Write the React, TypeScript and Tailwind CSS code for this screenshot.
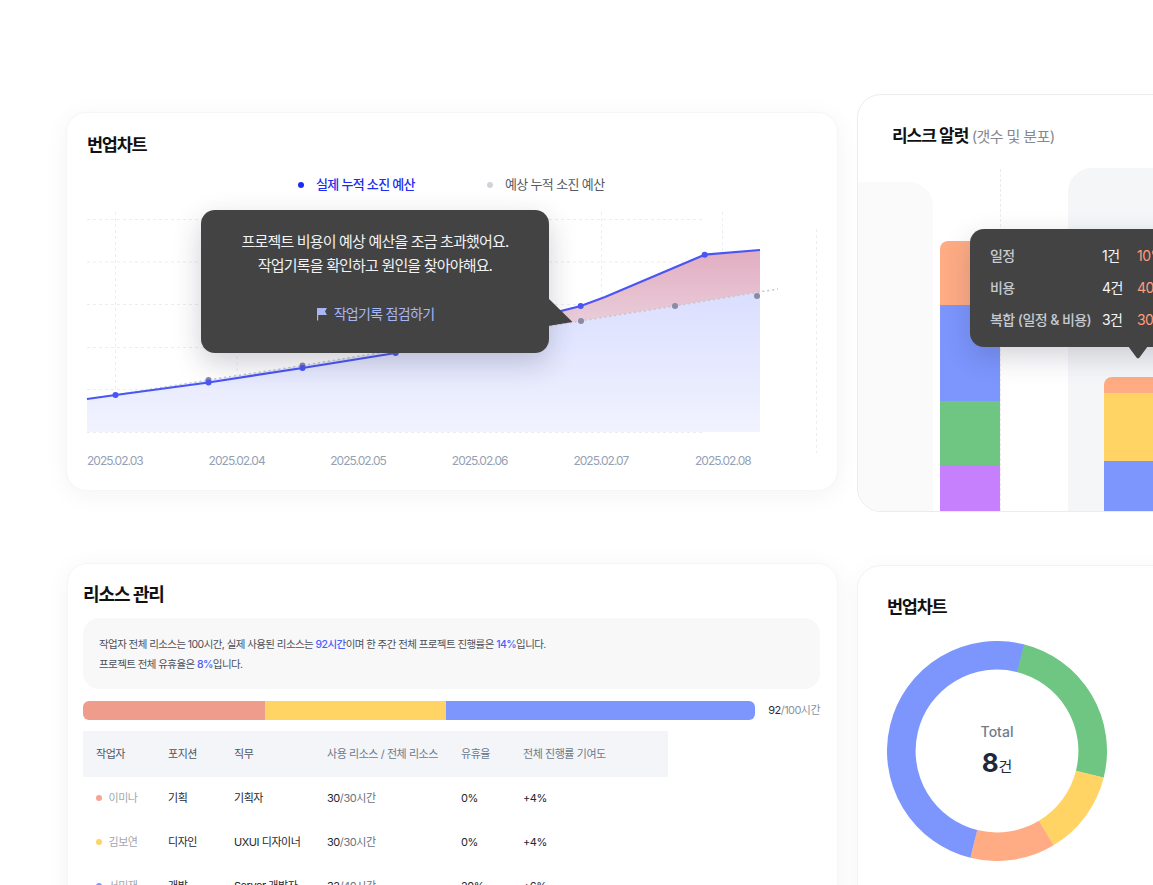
const blueLine = '87,399 115.5,395 208.5,382.5 302.5,368 395.6,353 490,329 580.7,306 605,297 704.7,254.7 760,250';
const greyLine = '115.5,395 208.5,380 302.5,365.5 395.6,350 490,335 580.7,321 675,306 760,292';

const dates = ['2025.02.03', '2025.02.04', '2025.02.05', '2025.02.06', '2025.02.07', '2025.02.08'];

const workers = [
  { name: '이미나', dot: 'bg-[#f9a392]', pos: '기획', job: '기획자', used: '30', total: '/30시간', idle: '0%', add: '+4%' },
  { name: '김보연', dot: 'bg-[#ffd465]', pos: '디자인', job: 'UXUI 디자이너', used: '30', total: '/30시간', idle: '0%', add: '+4%' },
  { name: '서민재', dot: 'bg-[#7c96fe]', pos: '개발', job: 'Server 개발자', used: '32', total: '/40시간', idle: '20%', add: '+6%' },
];

const alerts = [
  { label: '일정', count: '1건', pct: '10%' },
  { label: '비용', count: '4건', pct: '40%' },
  { label: '복합 (일정 & 비용)', count: '3건', pct: '30%' },
];

function BurnupChart() {
  const hLines = [219.5, 262, 304.5, 347.5, 389.5, 432.5];
  const vLines = [115.5, 237, 358.5, 480.5, 601.5, 722.5];
  return (
    <svg viewBox="67 205 770 248" className="block w-[770px] h-[248px]">
      <defs>
        <linearGradient id="under" x1="0" y1="290" x2="0" y2="432" gradientUnits="userSpaceOnUse">
          <stop offset="0" stopColor="#dadeff" />
          <stop offset="1" stopColor="#f1f3fe" />
        </linearGradient>
        <linearGradient id="over" x1="0" y1="250" x2="0" y2="330" gradientUnits="userSpaceOnUse">
          <stop offset="0" stopColor="#e2adc1" />
          <stop offset="1" stopColor="#ead0dc" />
        </linearGradient>
      </defs>
      {hLines.map((y) => (
        <line key={y} x1="87" x2="704" y1={y} y2={y} stroke="#ecedf0" strokeDasharray="3 3" />
      ))}
      {vLines.map((x) => (
        <line key={x} x1={x} x2={x} y1="212" y2="432" stroke="#ecedf0" strokeDasharray="3 3" />
      ))}
      <line x1="816.5" x2="816.5" y1="229" y2="453" stroke="#ecedf0" strokeDasharray="3 3" />
      <polygon points={`87,399 ${greyLine} 760,432 87,432`} fill="url(#under)" />
      <polygon points={`395.6,350 395.6,353 490,329 580.7,306 605,297 704.7,254.7 760,250 760,292 675,306 580.7,321 490,335`} fill="url(#over)" />
      <polyline points="115.5,395 208.5,380 302.5,365.5 395.6,350 490,335 580.7,321 675,306 778,289" fill="none" stroke="#c3c5d0" strokeWidth="1.5" strokeDasharray="2 3" />
      <polyline points={blueLine} fill="none" stroke="#4a55f5" strokeWidth="2.2" />
      {[[208.5, 380], [302.5, 365.5], [581, 321], [675, 306], [757, 296]].map(([x, y]) => (
        <circle key={x} cx={x} cy={y} r="3" fill="#8a8aa6" />
      ))}
      {[[115.5, 395], [208.5, 382.5], [302.5, 368], [395.6, 353], [580.7, 306], [704.7, 254.7]].map(([x, y]) => (
        <circle key={x} cx={x} cy={y} r="3" fill="#4a55f5" />
      ))}
    </svg>
  );
}

function Donut() {
  const r = 95.7;
  const c = 2 * Math.PI * r;
  const parts = [
    { color: '#6ec682', from: 14, deg: 90 },
    { color: '#ffd465', from: 104, deg: 45 },
    { color: '#ffac84', from: 149, deg: 45 },
    { color: '#7c96fe', from: 194, deg: 180 },
  ];
  return (
    <svg viewBox="0 0 220 220" className="absolute inset-0 w-[220px] h-[220px]">
      {parts.map((p) => (
        <circle
          key={p.color}
          cx="110"
          cy="110"
          r={r}
          fill="none"
          stroke={p.color}
          strokeWidth="28.6"
          strokeDasharray={`${(p.deg / 360) * c} ${c}`}
          transform={`rotate(${p.from - 90} 110 110)`}
        />
      ))}
    </svg>
  );
}

export default function App() {
  return (
    <div className="w-[1153px] h-[885px] overflow-hidden bg-white flex gap-[19px] pl-[67px] font-['Inter','Noto_Sans_CJK_KR',sans-serif]">
      <div className="w-[771px] shrink-0 pt-[113px]">
        {/* burnup */}
        <section className="relative w-[770px] h-[377px] rounded-[20px] bg-white border border-[#f6f6f7] shadow-[0_4px_24px_rgba(30,40,80,0.05)] -mt-px -ml-px box-content">
          <h2 className="pt-5 pl-5 text-[17.5px] leading-[24px] font-semibold tracking-[-0.07em] text-[#111]">번업차트</h2>
          <div className="flex mt-[18px] h-[20px] items-center text-[13px] tracking-[-0.05em]">
            <div className="flex items-center gap-3 ml-[231px] text-[#1d2df0] font-medium">
              <span className="w-[6px] h-[6px] rounded-full bg-[#1d2df0]" />
              실제 누적 소진 예산
            </div>
            <div className="flex items-center gap-3 ml-[72px] text-[#555a60]">
              <span className="w-[6px] h-[6px] rounded-full bg-[#d1d3db]" />
              예상 누적 소진 예산
            </div>
          </div>
          <div className="mt-[10px]">
            <BurnupChart />
          </div>
          <div className="flex pl-5 text-[12px] leading-4 tracking-[-0.08em] text-[#94a1b5]">
            {dates.map((d) => (
              <span key={d} className="w-[121.6px] shrink-0">{d}</span>
            ))}
          </div>
          <div className="absolute left-[134px] top-[97px] w-[348px] h-[143px] rounded-[14px] bg-[#434344] shadow-[0_10px_28px_rgba(40,40,70,0.22)] flex flex-col items-center pt-[20px]">
            <p className="text-[15px] leading-[24px] tracking-[-0.055em] text-[#f2f2f3] text-center">
              프로젝트 비용이 예상 예산을 조금 초과했어요.
              <br />
              작업기록을 확인하고 원인을 찾아야해요.
            </p>
            <div className="flex items-center gap-[6px] mt-[24px] text-[14px] leading-[24px] tracking-[-0.05em] text-[#aab6f3]">
              <svg viewBox="0 0 12 14" className="w-3 h-[14px]" fill="#aab6f3">
                <path d="M1 1h10L9 4.5 11 8H2.2v5.5H1z" />
              </svg>
              작업기록 점검하기
            </div>
            <svg viewBox="0 0 26 30" className="absolute left-[347px] top-[88px] w-[26px] h-[30px]" fill="#434344">
              <path d="M0 0 24.5 24 0 28z" />
            </svg>
          </div>
        </section>

        {/* resources */}
        <section className="w-[771px] h-[400px] mt-[72px] rounded-[20px] bg-white border border-[#f6f6f7] shadow-[0_4px_24px_rgba(30,40,80,0.05)] px-[15px] pt-[19px]">
          <h2 className="text-[18px] leading-[24px] font-semibold tracking-[-0.06em] text-[#111]">리소스 관리</h2>
          <div className="mt-[11px] h-[71px] w-[737px] rounded-2xl bg-[#f8f8f9] px-4 pt-[17px] text-[10.5px] leading-5 tracking-[-0.055em] text-[#4b5058]">
            <p>작업자 전체 리소스는 100시간, 실제 사용된 리소스는 <b className="font-medium text-[#4a5cff]">92시간</b>이며 한 주간 전체 프로젝트 진행률은 <b className="font-medium text-[#4a5cff]">14%</b>입니다.</p>
            <p>프로젝트 전체 유휴율은 <b className="font-medium text-[#4a5cff]">8%</b>입니다.</p>
          </div>
          <div className="mt-3 flex items-center w-[737px]">
            <div className="w-[672px] h-[19px] rounded-md overflow-hidden flex">
              <div className="w-[181.5px] bg-[#ef9c8c]" />
              <div className="w-[181.5px] bg-[#ffd465]" />
              <div className="flex-1 bg-[#7c96fe]" />
            </div>
            <div className="ml-auto text-[11px] tracking-[-0.05em] text-[#8b93a1]"><span className="text-[#2b2f36]">92</span>/100시간</div>
          </div>
          <table className="mt-[11px] w-[585px] table-fixed border-collapse text-[11px] tracking-[-0.04em]">
            <thead>
              <tr className="h-[46px] bg-[#f4f5f8] text-left">
                <th className="w-[85px] pl-[13px] font-normal text-[#4b5563]">작업자</th>
                <th className="w-[66px] font-normal text-[#4b5563]">포지션</th>
                <th className="w-[93px] font-normal text-[#4b5563]">직무</th>
                <th className="w-[134px] font-normal text-[#6b7a8c]">사용 리소스 / 전체 리소스</th>
                <th className="w-[62px] font-normal text-[#6b7a8c]">유휴율</th>
                <th className="font-normal text-[#6b7a8c]">전체 진행률 기여도</th>
              </tr>
            </thead>
            <tbody className="text-[#24272c] [&_td]:pb-[2px]">
              {workers.map((w) => (
                <tr key={w.name} className="h-[44px]">
                  <td className="pl-[13px]">
                    <span className="flex items-center gap-[6.5px] text-[#a3a7ae]">
                      <span className={`w-[6px] h-[6px] rounded-full ${w.dot}`} />
                      {w.name}
                    </span>
                  </td>
                  <td>{w.pos}</td>
                  <td>{w.job}</td>
                  <td>{w.used}<span className="text-[#6b7280]">{w.total}</span></td>
                  <td>{w.idle}</td>
                  <td>{w.add}</td>
                </tr>
              ))}
            </tbody>
          </table>
        </section>
      </div>

      <div className="w-[400px] shrink-0 pt-[94px]">
        {/* risk */}
        <section className="relative w-[400px] h-[418px] rounded-[24px] bg-white border border-[#ececee] overflow-hidden flex flex-col">
          <h2 className="pl-[34px] pt-[29px] h-[74px] leading-[24px] tracking-[-0.06em] text-[17px] font-semibold text-[#111]">
            리스크 알럿 <span className="text-[15px] font-normal tracking-[-0.04em] text-[#85898f]">(갯수 및 분포)</span>
          </h2>
          <div className="flex items-end flex-1">
            <div className="w-[75px] h-[329px] rounded-tr-[24px] bg-[#fafafa]" />
            <div className="ml-[7px] w-[60px] h-[342px] border-r border-dashed border-[#eceaea] flex flex-col justify-end box-content -mr-px">
              <div className="h-[64px] rounded-t-lg bg-[#ffac84]" />
              <div className="h-[96px] bg-[#7c96fe]" />
              <div className="h-[64px] bg-[#6ec682]" />
              <div className="h-[46px] bg-[#c680fe]" />
            </div>
            <div className="ml-[68px] flex-1 h-[343px] rounded-tl-[24px] bg-[#f5f6f8] pl-9 flex flex-col justify-end">
              <div className="w-[60px] flex flex-col">
                <div className="h-[16px] rounded-t-lg bg-[#ffac84]" />
                <div className="h-[68px] bg-[#ffd465]" />
                <div className="h-[50px] bg-[#7c96fe]" />
              </div>
            </div>
          </div>
          <div className="absolute left-[112px] top-[134px] w-[230px] h-[118px] rounded-[14px] bg-[#434344] shadow-[0_10px_28px_rgba(40,40,70,0.2)] pl-5 pt-[11px] text-[14px] leading-[32px] tracking-[-0.04em]">
            {alerts.map((a) => (
              <div key={a.label} className="flex">
                <span className="w-[112px] font-medium text-[#c6cad1] whitespace-nowrap">{a.label}</span>
                <span className="w-[35px] text-[#f5f5f5]">{a.count}</span>
                <span className="text-[#ff9c7f]">{a.pct}</span>
              </div>
            ))}
            <svg viewBox="0 0 20 13" className="absolute left-[158px] top-[117px] w-5 h-[13px]" fill="#434344">
              <path d="M0 0h20L11.5 11.5a2 2 0 0 1-3 0z" />
            </svg>
          </div>
        </section>

        {/* donut */}
        <section className="w-[400px] h-[400px] mt-[53px] rounded-[24px] bg-white border border-[#f3f3f4] shadow-[0_4px_24px_rgba(30,40,80,0.04)] pl-[29px] pt-[29px]">
          <h2 className="text-[17.5px] leading-[24px] font-semibold tracking-[-0.07em] text-[#111]">번업차트</h2>
          <div className="relative mt-[22px] w-[220px] h-[220px] pt-[4px] flex flex-col items-center justify-center">
            <Donut />
            <span className="text-[14px] leading-5 font-medium text-[#6f7c8c]">Total</span>
            <span className="mt-[4px] leading-[34px] text-[#1f2937]">
              <b className="text-[26px] font-bold">8</b>
              <span className="text-[15px]">건</span>
            </span>
          </div>
        </section>
      </div>
    </div>
  );
}
